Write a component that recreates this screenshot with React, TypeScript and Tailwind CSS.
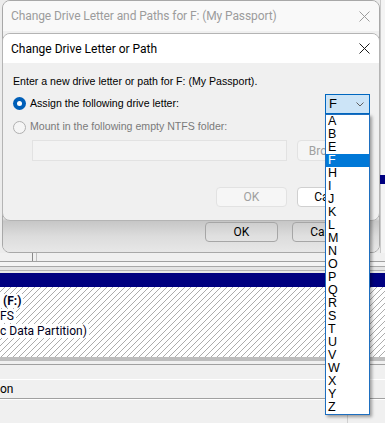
import React from "react";

const letters = ["A","B","E","F","H","I","J","K","L","M","N","O","P","Q","R","S","T","U","V","W","X","Y","Z"];

function CloseIcon({ color }: { color: string }) {
  return (
    <svg width="11" height="11" viewBox="0 0 11 11">
      <path d="M0.5 0.5L10.5 10.5M10.5 0.5L0.5 10.5" stroke={color} strokeWidth="1" />
    </svg>
  );
}

export default function App() {
  return (
    <div className="relative w-[385px] h-[423px] overflow-hidden bg-[#f0f0f0] font-['Roboto',sans-serif] text-black">
      {/* background disk management window */}
      <div className="flex flex-col h-full">
        <div className="h-[253px] bg-[#ececec] flex justify-end">
          <div className="w-[5px] h-full flex flex-col">
            <div className="h-[175px] border-l border-[#c8c8c8] bg-[#f4f4f4]" />
            <div className="h-[9px] bg-[#000080]" />
            <div className="flex-1 bg-[#f4f4f4] border-l border-[#c8c8c8]" />
          </div>
        </div>
        <div className="h-[8px] bg-[#f0f0f0] flex">
          <div className="ml-[32px] w-px h-full bg-[#8a8a8a]" />
          <div className="ml-[3px] w-px h-full bg-[#c0c0c0]" />
        </div>
        <div className="h-px bg-[#a0a0a0]" />
        <div className="h-[4px] bg-[#f4f4f4]" />
        <div className="h-px bg-[#a8a8a8]" />
        <div className="h-[3px] bg-[#e4e4e4]" />
        <div className="h-px bg-[#b4b4b4]" />
        <div className="h-[2px] bg-[#e8e8e8]" />
        <div className="h-[14px] bg-[#000080]" />
        <div className="h-[70px] bg-[repeating-linear-gradient(135deg,#ffffff_0px,#ffffff_3.5px,#acacac_3.5px,#acacac_4.24px)] flex flex-col pt-[7px] text-[12px] leading-[14px] text-[#000020]">
          <div className="flex"><span className="bg-white pl-[3px] pr-[2px] font-bold">(F:)</span></div>
          <div className="flex mt-[1px]"><span className="bg-white pr-[2px] pl-0">FS</span></div>
          <div className="flex mt-[1px]"><span className="bg-white pr-[2px] pl-0">c Data Partition)</span></div>
        </div>
        <div className="h-[4px] bg-[#bdbdbd]" />
        <div className="h-[3px] bg-[#f0f0f0]" />
        <div className="h-px bg-[#a0a0a0]" />
        <div className="h-[14px] bg-[#f0f0f0]" />
        <div className="h-px bg-white" />
        <div className="h-[18px] flex items-center text-[12px]">on</div>
        <div className="h-px bg-[#a0a0a0]" />
        <div className="h-px bg-white" />
        <div className="flex-1 bg-[#f0f0f0] flex">
          <div className="ml-[347px] w-px h-full bg-[#d0d0d0]" />
        </div>
      </div>

      {/* outer dialog */}
      <div className="absolute left-[2px] top-0 w-[378px] h-[253px] rounded-[8px] border border-[#a8a8a8] overflow-hidden flex flex-col bg-[#f0f0f0]">
        <div className="h-[30px] bg-[#f9f9f9] flex items-center justify-between pl-[8px] pr-[9px]">
          <span className="text-[12px] text-[#9c9c9c] tracking-[-0.1px]">Change Drive Letter and Paths for F: (My Passport)</span>
          <CloseIcon color="#9c9c9c" />
        </div>
        <div className="flex-1 flex flex-col justify-end pb-[10px] bg-[linear-gradient(to_bottom,#f0f0f0_0px,#f0f0f0_186px,#c6c6c6_190px,#dcdcdc_205px,#e8e8e8_222px)]">
          <div className="flex justify-end gap-[14px] pr-[14px]">
            <div className="w-[73px] h-[20px] rounded-[4px] border border-[#a6a6a6] bg-white/10 flex items-center justify-center text-[12px]">OK</div>
            <div className="w-[73px] h-[20px] rounded-[4px] border border-[#a6a6a6] bg-white/10 flex items-center justify-center text-[12px]">Cancel</div>
          </div>
        </div>
      </div>

      {/* inner dialog */}
      <div className="absolute left-[2px] top-[33px] w-[378px] h-[188px] rounded-[8px] border border-[#b4b4b4] overflow-hidden flex flex-col bg-[#f0f0f0]">
        <div className="h-[29px] bg-white flex items-center justify-between pl-[8px] pr-[9px] shrink-0">
          <span className="text-[12px]">Change Drive Letter or Path</span>
          <CloseIcon color="#1a1a1a" />
        </div>
        <div className="flex-1 flex flex-col pl-[10px] pr-[9px] pt-[11px] font-['Liberation_Sans',sans-serif] text-[10.6px]">
          <div className="h-[14px] leading-[14px]">Enter a new drive letter or path for F: (My Passport).</div>
          <div className="mt-[6px] h-[20px] flex items-center justify-between">
            <div className="flex items-center">
              <div className="w-[13px] h-[13px] rounded-full bg-[#005fb8] flex items-center justify-center">
                <div className="w-[5px] h-[5px] rounded-full bg-white" />
              </div>
              <span className="ml-[4px]">Assign the following drive letter:</span>
            </div>
            <div className="w-[45px] h-[20px] border border-[#0067c0] bg-[#cce4f7] flex items-center justify-between pl-[3px] pr-[5px] text-[13px]">
              <span>F</span>
              <svg width="8" height="5" viewBox="0 0 8 5"><path d="M0.5 0.5L4 4L7.5 0.5" fill="none" stroke="#606060" strokeWidth="1" /></svg>
            </div>
          </div>
          <div className="mt-[6px] h-[14px] flex items-center text-[#7a7a7a]">
            <div className="w-[13px] h-[13px] rounded-full border border-[#b0b0b0] bg-[#f5f5f5]" />
            <span className="ml-[4px]">Mount in the following empty NTFS folder:</span>
          </div>
          <div className="mt-[6px] flex h-[21px] ml-[19px]">
            <div className="w-[255px] h-full border border-[#e2e2e2] bg-[#f3f3f3]" />
            <div className="ml-[10px] w-[73px] h-full rounded-[4px] border border-[#e2e2e2] bg-[#f5f5f5] flex items-center justify-center text-[12px] text-[#a0a0a0] font-['Roboto',sans-serif]">Browse...</div>
          </div>
          <div className="mt-[26px] flex h-[20px] ml-[203px]">
            <div className="w-[71px] h-full rounded-[4px] border border-[#e2e2e2] bg-[#f6f6f6] flex items-center justify-center text-[12px] text-[#a0a0a0] font-['Roboto',sans-serif]">OK</div>
            <div className="ml-[10px] w-[71px] h-full rounded-[4px] border border-[#d0d0d0] bg-white flex items-center justify-center text-[12px] font-['Roboto',sans-serif]">Cancel</div>
          </div>
        </div>
      </div>

      {/* dropdown list */}
      <div className="absolute left-[325px] top-[114px] w-[45px] h-[301px] border border-[#1e6fc0] bg-white shadow-[2px_2px_3px_rgba(0,0,0,0.35)] font-['Liberation_Sans',sans-serif] text-[12.5px]">
        {letters.map((l) => (
          <div
            key={l}
            className={l === "F" ? "h-[13px] leading-[13px] pl-[2px] bg-[#0078d7] text-white" : "h-[13px] leading-[13px] pl-[2px] text-black"}
          >
            {l}
          </div>
        ))}
      </div>
    </div>
  );
}
